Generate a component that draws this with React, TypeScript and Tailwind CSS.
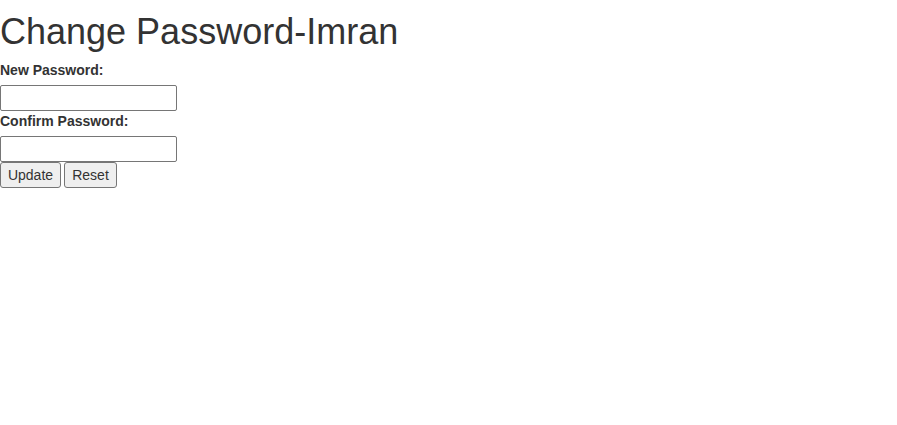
export default function App() {
  return (
    <div className="min-h-screen bg-white text-[#333] font-['Liberation_Sans',Arial,sans-serif] text-sm">
      <h1 className="text-[36px] leading-[1.1] font-normal pt-[12px] pb-[8px]">Change Password-Imran</h1>
      <form className="flex flex-col items-start" onSubmit={(e) => e.preventDefault()}>
        <label className="font-bold leading-5 mb-[5px]">New Password:</label>
        <input
          type="password"
          className="w-[177px] h-[26px] border border-[#767676] rounded-[2px] bg-white px-1 outline-none"
        />
        <label className="font-bold leading-5 mb-[5px]">Confirm Password:</label>
        <input
          type="password"
          className="w-[177px] h-[26px] border border-[#767676] rounded-[2px] bg-white px-1 outline-none"
        />
        <div className="flex gap-[3px]">
          <button type="submit" className="w-[61px] h-[26px] bg-[#efefef] border border-[#767676] rounded-[3px] text-sm text-[#333]">
            Update
          </button>
          <button type="reset" className="w-[53px] h-[26px] bg-[#efefef] border border-[#767676] rounded-[3px] text-sm text-[#333]">
            Reset
          </button>
        </div>
      </form>
    </div>
  );
}
